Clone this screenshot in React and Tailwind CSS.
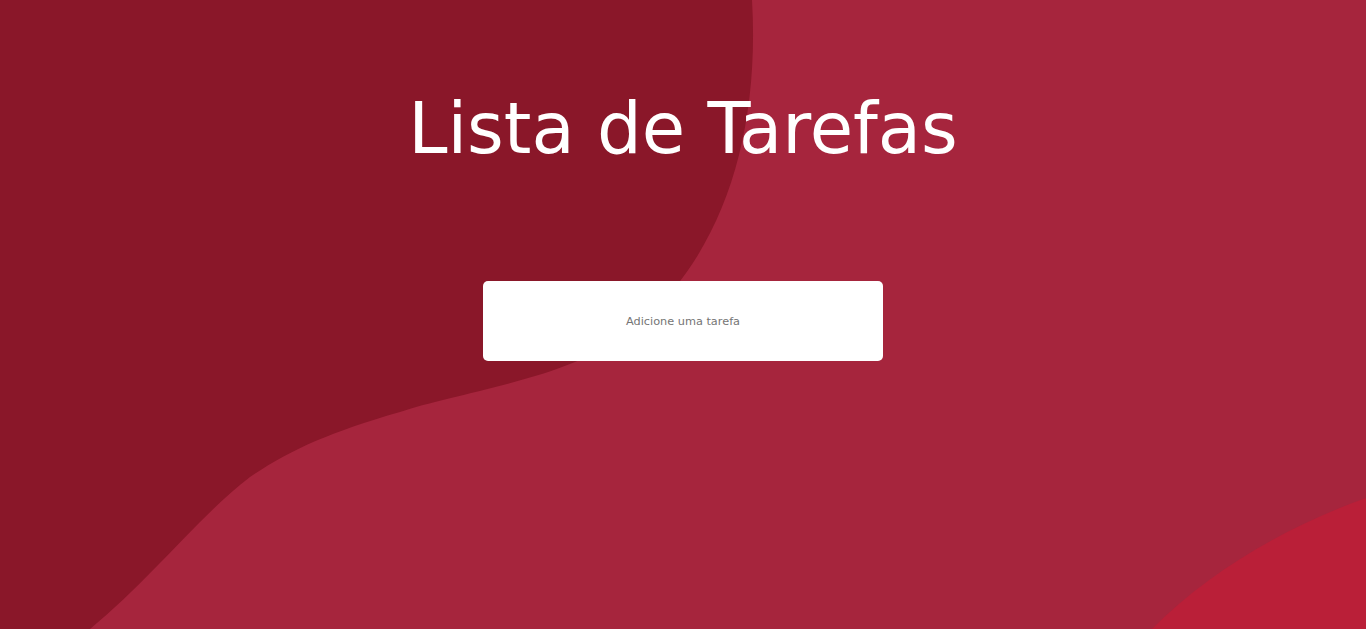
import React from 'react';

const Background = () => (
    <svg
        className="absolute inset-0 w-full h-full"
        viewBox="0 0 1366 629"
        preserveAspectRatio="none"
    >
        <rect width="1366" height="629" fill="#a6253d" />
        <path
            d="M0,0 H752 C762,170 700,310 575,362 C520,385 440,398 400,412 C330,432 290,450 250,477 C200,515 150,580 90,629 H0 Z"
            fill="#8a1729"
        />
        <path d="M1152,629 C1210,570 1290,525 1366,498 V629 Z" fill="#ba1f38" />
    </svg>
);

export default function App() {
    return (
        <div className="relative h-[629px] w-full overflow-hidden font-['DejaVu_Sans',Verdana,sans-serif]">
            <Background />
            <div className="relative z-10 flex flex-col items-center">
                <h1 className="mt-[82px] text-[70.5px] leading-[94px] font-normal text-white">
                    Lista de Tarefas
                </h1>
                <input
                    type="text"
                    placeholder="Adicione uma tarefa"
                    className="mt-[105px] h-20 w-[400px] rounded-[5px] bg-white text-center text-[11.3px] text-[#333] placeholder:text-[#757575] outline-none"
                />
            </div>
        </div>
    );
}
